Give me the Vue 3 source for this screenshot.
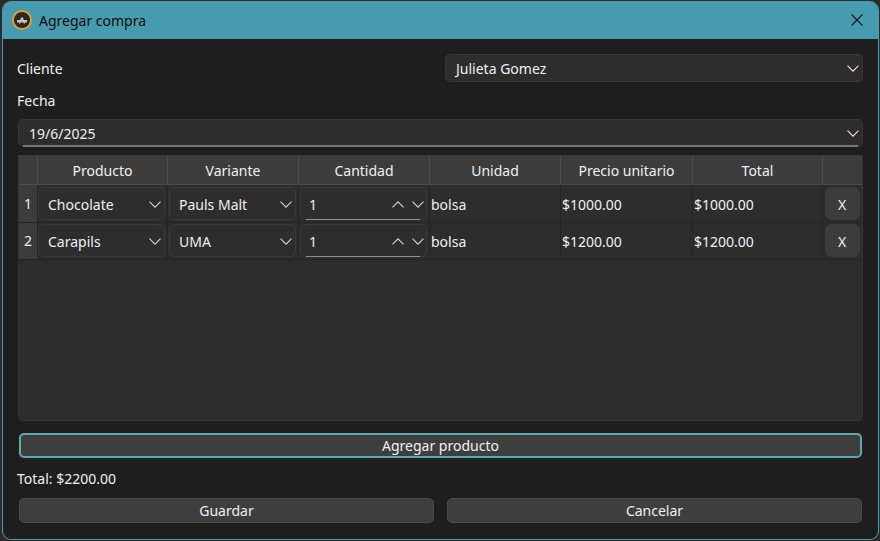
<template>
  <div class="window">
    <header class="titlebar">
      <svg class="app-icon" width="20" height="20" viewBox="0 0 20 20">
        <circle cx="10" cy="10" r="9" fill="#2a2622" stroke="#dfa02c" stroke-width="2" />
        <path d="M5 10h3.2l.8-2.4h2l.8 2.4H15v2.4h-2v1.2h-1.4v-1.2H8.400v1.200H7v-1.200H5z" fill="#c9c3b4" />
      </svg>
      <span class="window-title">Agregar compra</span>
      <svg class="close-icon" width="12" height="12" viewBox="0 0 12 12">
        <path d="M.5.5l11 11M11.500.5l-11 11" stroke="#111" stroke-width="1.100" fill="none" />
      </svg>
    </header>

    <main class="content">
      <div class="client-row">
        <label>Cliente</label>
        <div class="combo client-combo">
          <span>Julieta Gomez</span>
          <svg class="chev accent" width="12" height="7" viewBox="0 0 12 7"><path d="M.5.700L6 6.200 11.500.7" /></svg>
        </div>
      </div>

      <label class="date-label">Fecha</label>
      <div class="combo date-combo">
        <span>19/6/2025</span>
        <svg class="chev accent" width="12" height="7" viewBox="0 0 12 7"><path d="M.5.700L6 6.200 11.500.7" /></svg>
      </div>

      <section class="table">
        <div class="table-row head">
          <div class="row-num"></div>
          <div v-for="col in columns" :key="col" class="th">{{ col }}</div>
          <div class="th"></div>
        </div>
        <div v-for="(row, i) in rows" :key="i" class="table-row item">
          <div class="row-num">{{ i + 1 }}</div>
          <div class="td">
            <div class="cell-combo">
              <span>{{ row.product }}</span>
              <svg class="chev" width="12" height="7" viewBox="0 0 12 7"><path d="M.5.700L6 6.200 11.500.7" /></svg>
            </div>
          </div>
          <div class="td">
            <div class="cell-combo">
              <span>{{ row.variant }}</span>
              <svg class="chev" width="12" height="7" viewBox="0 0 12 7"><path d="M.5.700L6 6.200 11.500.7" /></svg>
            </div>
          </div>
          <div class="td">
            <div class="spin">
              <span>{{ row.qty }}</span>
              <svg class="chev" width="12" height="7" viewBox="0 0 12 7"><path d="M.5 6.300L6 .8l5.500 5.500" /></svg>
              <svg class="chev" width="12" height="7" viewBox="0 0 12 7"><path d="M.5.700L6 6.200 11.500.7" /></svg>
            </div>
          </div>
          <div class="td text">{{ row.unit }}</div>
          <div class="td text">{{ row.price }}</div>
          <div class="td text">{{ row.total }}</div>
          <div class="td action"><button class="remove">X</button></div>
        </div>
      </section>

      <button class="btn add-btn">Agregar producto</button>
      <div class="total">Total: $2200.00</div>
      <div class="actions">
        <button class="btn">Guardar</button>
        <button class="btn">Cancelar</button>
      </div>
    </main>
  </div>
</template>

<script setup>
const columns = ["Producto", "Variante", "Cantidad", "Unidad", "Precio unitario", "Total"];

const rows = [
  { product: "Chocolate", variant: "Pauls Malt", qty: 1, unit: "bolsa", price: "$1000.00", total: "$1000.00" },
  { product: "Carapils", variant: "UMA", qty: 1, unit: "bolsa", price: "$1200.00", total: "$1200.00" }
];
</script>

<style>
html, body {
  margin: 0;
  background: #2b2b2b;
}
</style>

<style scoped>
.window {
  box-sizing: border-box;
  width: 877px;
  height: 539px;
  margin: 1px 0 0 2px;
  display: flex;
  flex-direction: column;
  background: #1e1e1e;
  border: 1px solid #4a9bad;
  border-top: none;
  border-radius: 9px;
  overflow: hidden;
  font-family: "Noto Sans", "Open Sans", sans-serif;
  font-size: 14px;
  color: #f0f0f0;
}

/* title bar */
.titlebar {
  height: 38px;
  flex: none;
  display: flex;
  align-items: center;
  background: #479bae;
  color: #0c0c0c;
  padding: 0 15px 0 9px;
}
.app-icon {
  margin-right: 7px;
}
.window-title {
  flex: 1;
}

/* form */
.content {
  flex: 1;
  display: flex;
  flex-direction: column;
  padding: 15px 15px 0 14px;
}
.client-row {
  display: flex;
  align-items: center;
  justify-content: space-between;
  height: 28px;
}
.combo {
  box-sizing: border-box;
  height: 28px;
  display: flex;
  align-items: center;
  justify-content: space-between;
  padding: 0 3px 0 10px;
  background: #2d2d2d;
  border: 1px solid #383838;
  border-radius: 5px;
}
.client-combo {
  width: 418px;
}
.date-label {
  margin-top: 9px;
  line-height: 19px;
}
.date-combo {
  position: relative;
  margin: 9px 0 0 1px;
}
.date-combo::after {
  content: "";
  position: absolute;
  left: 4px;
  right: 4px;
  bottom: -1px;
  height: 2px;
  background: #7a7a7a;
}
.chev {
  fill: none;
  stroke: #d6d6d6;
  stroke-width: 1.100;
  flex: none;
}
.chev.accent {
  stroke: #f0e6d2;
}

/* table */
.table {
  box-sizing: border-box;
  height: 266px;
  margin: 8px 0 0 1px;
  background: #2d2d2d;
  border: 1px solid #353535;
  border-top: none;
  border-radius: 0 0 5px 5px;
}
.table-row {
  display: grid;
  grid-template-columns: 18px 130px 131px 131px 131px 132px 130px 1fr;
}
.head {
  height: 30px;
  background: #3c3c3c;
  border-bottom: 1px solid #4c4c4c;
  box-sizing: border-box;
}
.th {
  display: flex;
  align-items: center;
  justify-content: center;
  padding-top: 2px;
  border-left: 1px solid #4c4c4c;
}
.item {
  height: 37.5px;
  border-bottom: 1px solid #252525;
  box-sizing: border-box;
}
.row-num {
  display: flex;
  align-items: center;
  justify-content: center;
  background: #3c3c3c;
}
.td {
  box-sizing: border-box;
  min-width: 0;
  display: flex;
  align-items: center;
  padding: 0 2px 0 1px;
  border-left: 1px solid #252525;
}
.td:nth-child(2) {
  padding-left: 0;
}
.td.text {
  padding: 2px 1px 0;
}
.td.action {
  justify-content: center;
}
.cell-combo,
.spin {
  box-sizing: border-box;
  flex: 1;
  height: 33px;
  display: flex;
  align-items: center;
  padding: 2px 3px 0 9px;
  background: #2d2d2d;
  border: 1px solid #3a3a3a;
  border-radius: 6px;
}
.cell-combo {
  justify-content: space-between;
}
.spin {
  position: relative;
  gap: 8px;
  padding: 2px 2px 0 8px;
}
.spin span {
  flex: 1;
}
.spin::after {
  content: "";
  position: absolute;
  left: 5px;
  right: 6px;
  bottom: -1px;
  height: 1px;
  background: #8f8f8f;
}
.remove {
  width: 35px;
  height: 33px;
  padding: 2px 0 0;
  border: none;
  border-radius: 7px;
  background: #3c3c3c;
  color: #f0f0f0;
  font: inherit;
}

/* buttons */
.btn {
  box-sizing: border-box;
  height: 25px;
  padding: 0;
  background: #3e3e3e;
  border: 1px solid #4a4a4a;
  border-radius: 5px;
  color: #f0f0f0;
  font: inherit;
}
.add-btn {
  margin: 12px 1px 0 2px;
  border: 2px solid #5da9b1;
}
.total {
  margin-top: 11px;
  line-height: 19px;
}
.actions {
  display: grid;
  grid-template-columns: 415px 415px;
  justify-content: space-between;
  margin: 10px 1px 0 2px;
}
</style>
